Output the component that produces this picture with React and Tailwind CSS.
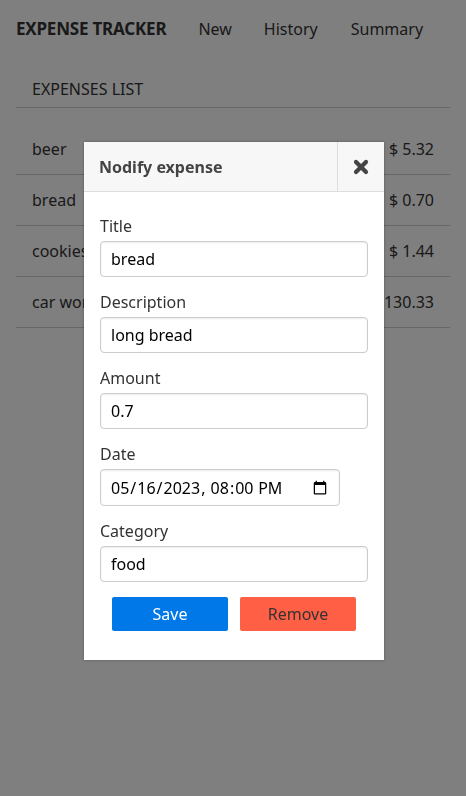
import { X } from "lucide-react";

const expenses = [
  { title: "beer", amount: "$ 5.32" },
  { title: "bread", amount: "$ 0.70" },
  { title: "cookies", amount: "$ 1.44" },
  { title: "car wor", amount: "$ 130.33" },
];

const font = { fontFamily: '"Noto Sans", "Open Sans", sans-serif' };

function Field({ label, children }) {
  return (
    <div className="mb-[15px]">
      <label className="block text-[16px] leading-[20px] text-[#333] mb-[5px]">{label}</label>
      {children}
    </div>
  );
}

const inputCls =
  "block w-full h-[36px] px-[10px] rounded-[4px] border border-[#ccc] bg-white text-[16px] text-black outline-none shadow-[inset_0_1px_2px_rgba(0,0,0,0.08)]";

export default function App() {
  return (
    <div className="relative min-h-[796px] bg-white text-[#333]" style={font}>
      <nav className="flex items-center h-[58px] px-[16px] text-[16px]">
        <span className="font-bold text-[17px] tracking-[-0.2px] mr-[32px]">EXPENSE TRACKER</span>
        <span className="mr-[32px]">New</span>
        <span className="mr-[33px]">History</span>
        <span>Summary</span>
      </nav>

      <div className="mx-[16px] mt-[21px]">
        <div className="px-[16px] pb-[8px] text-[16px] leading-[20px] border-b border-[#ccc]">EXPENSES LIST</div>
        <div className="mt-[16px]">
          {expenses.map((e) => (
            <div
              key={e.title}
              className="flex justify-between items-center h-[51px] px-[16px] text-[16px] border-b border-[#ccc]"
            >
              <span>{e.title}</span>
              <span>{e.amount}</span>
            </div>
          ))}
        </div>
      </div>

      <div className="fixed inset-0 bg-black/50">
        <div className="absolute left-[84px] top-[142px] w-[300px] bg-white shadow-[0_0_3px_rgba(0,0,0,0.3)]">
          <div className="flex items-stretch h-[50px] bg-[#f7f7f7] border-b border-[#ddd]">
            <div className="flex-1 flex items-center pl-[15px] font-bold text-[16px] text-[#444]">Nodify expense</div>
            <div className="w-[47px] flex items-center justify-center border-l border-[#ddd]">
              <X size={20} strokeWidth={5} className="text-[#444]" />
            </div>
          </div>
          <div className="px-[16px] pt-[24px] pb-[29px]">
            <Field label="Title">
              <input className={inputCls} style={font} defaultValue="bread" />
            </Field>
            <Field label="Description">
              <input className={inputCls} style={font} defaultValue="long bread" />
            </Field>
            <Field label="Amount">
              <input className={inputCls} style={font} defaultValue="0.7" />
            </Field>
            <Field label="Date">
              <input
                type="datetime-local"
                className={inputCls + " !w-[240px] !h-[37px] !px-[9px]"}
                style={font}
                defaultValue="2023-05-16T20:00"
              />
            </Field>
            <Field label="Category">
              <input className={inputCls} style={font} defaultValue="food" />
            </Field>
            <div className="flex justify-center gap-[12px]">
              <button className="w-[116px] h-[34px] rounded-[2px] bg-[#0078e7] text-white text-[16px]">Save</button>
              <button className="w-[116px] h-[34px] rounded-[2px] bg-[#ff5f45] text-[#333] text-[16px]">Remove</button>
            </div>
          </div>
        </div>
      </div>
    </div>
  );
}
